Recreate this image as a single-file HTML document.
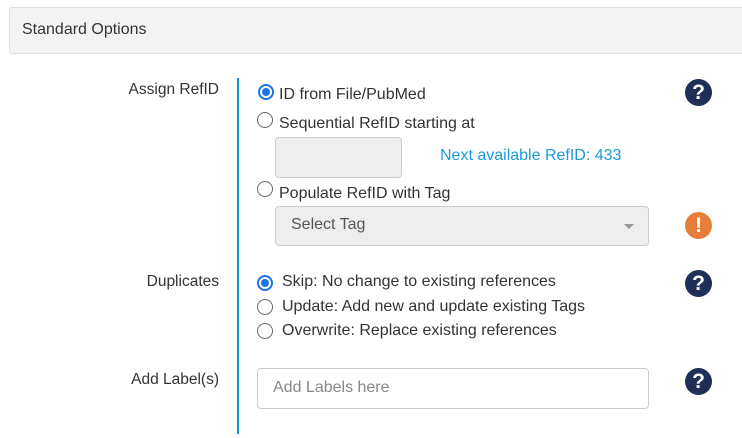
<!DOCTYPE html>
<html><head><style>
body{margin:0;width:742px;height:438px;background:#fff;font-family:"Liberation Sans",sans-serif;color:#333;position:relative;overflow:hidden}
.a{position:absolute;white-space:nowrap}
.hdr{position:absolute;left:9px;top:7px;width:740px;height:45px;background:#f4f4f4;border:1px solid #e0e0e0;border-radius:3px}
.lbl{position:absolute;right:523px;font-size:15.5px;color:#333}
.t{position:absolute;font-size:16px;color:#333;white-space:nowrap}
.r{position:absolute;width:14px;height:14px;border:1px solid #666;border-radius:50%;background:#fff}
.r.on{border:2px solid #1a73e8;width:12px;height:12px}
.r.on:after{content:"";position:absolute;left:2px;top:2px;width:8px;height:8px;border-radius:50%;background:#1a73e8}
.ic{position:absolute;width:27px;height:27px;border-radius:50%;background:#1e3057;color:#fff;font-weight:bold;font-size:21px;text-align:center;line-height:27px}
.box{position:absolute;border:1px solid #ccc;border-radius:4px}
</style></head><body>
<div class="hdr"></div>
<div class="a" style="left:22px;top:21px;font-size:16px;color:#333">Standard Options</div>
<div class="a" style="left:237px;top:78px;width:2px;height:356px;background:#1a8fd6"></div>

<div class="lbl" style="top:81px">Assign RefID</div>
<div class="r on" style="left:258px;top:84px"></div>
<div class="t" style="left:279px;top:86px">ID from File/PubMed</div>
<div class="r" style="left:257px;top:112px"></div>
<div class="t" style="left:279px;top:115px">Sequential RefID starting at</div>
<div class="box" style="left:275px;top:137px;width:125px;height:39px;background:#eee"></div>
<div class="a" style="left:440px;top:147px;font-size:16px;color:#1a9bd7">Next available RefID: 433</div>
<div class="r" style="left:257px;top:181px"></div>
<div class="t" style="left:279px;top:185px">Populate RefID with Tag</div>
<div class="box" style="left:275px;top:206px;width:372px;height:38px;background:#eee"></div>
<div class="a" style="left:291px;top:216px;font-size:16px;color:#555">Select Tag</div>
<div class="a" style="left:624px;top:224px;width:0;height:0;border-left:5px solid transparent;border-right:5px solid transparent;border-top:5px solid #999"></div>

<div class="lbl" style="top:273px">Duplicates</div>
<div class="r on" style="left:257px;top:275px"></div>
<div class="t" style="left:282px;top:273px">Skip: No change to existing references</div>
<div class="r" style="left:257px;top:299px"></div>
<div class="t" style="left:282px;top:298px">Update: Add new and update existing Tags</div>
<div class="r" style="left:257px;top:323px"></div>
<div class="t" style="left:282px;top:322px">Overwrite: Replace existing references</div>

<div class="lbl" style="top:371px">Add Label(s)</div>
<div class="box" style="left:257px;top:368px;width:390px;height:39px;background:#fff"></div>
<div class="a" style="left:273px;top:379px;font-size:16px;color:#888">Add Labels here</div>

<div class="ic" style="left:685px;top:79px">?</div>
<div class="ic" style="left:685px;top:212px;background:#e67e3a">!</div>
<div class="ic" style="left:685px;top:270px">?</div>
<div class="ic" style="left:685px;top:368px">?</div>
</body></html>
